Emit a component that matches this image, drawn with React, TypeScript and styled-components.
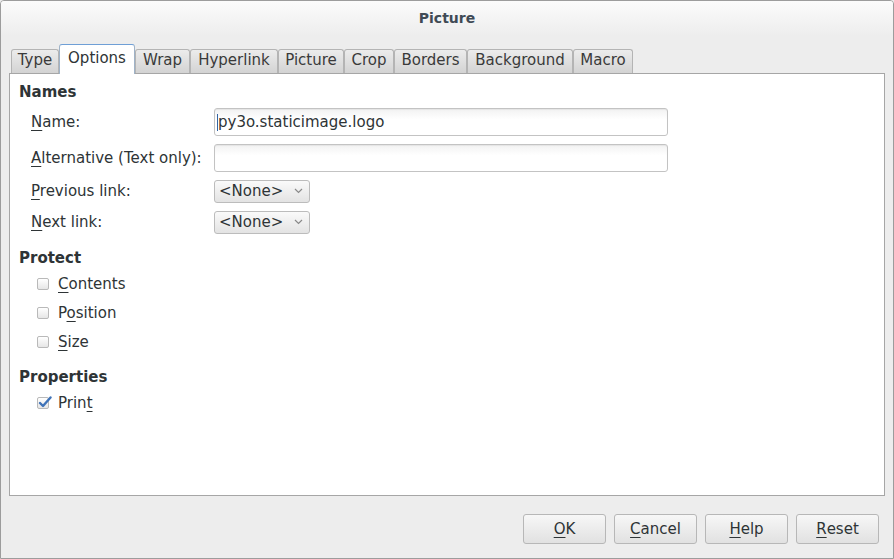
import React from "react";
import styled, { createGlobalStyle } from "styled-components";

const Global = createGlobalStyle`
  * { box-sizing: border-box; }
  html, body { margin: 0; padding: 0; background: #ededed; }
  body { font-family: "DejaVu Sans", "Liberation Sans", sans-serif; font-size: 15px; color: #2e3436; }
`;

const Window = styled.div`
  width: 894px;
  height: 559px;
  border: 1px solid #9c9c9c;
  border-radius: 4px 4px 0 0;
  background: #ededed;
  display: flex;
  flex-direction: column;
  overflow: hidden;
`;

const TitleBar = styled.div`
  height: 35px;
  display: flex;
  align-items: center;
  justify-content: center;
  padding-bottom: 1px;
  background: linear-gradient(#fbfbfb, #ededed);
  font-size: 14px;
  font-weight: bold;
  color: #3f4a55;
`;

const TabStrip = styled.div`
  margin: 8px 8px 0 8px;
  padding-left: 2px;
  height: 29px;
  display: flex;
  align-items: flex-end;
`;

const Tab = styled.div<{ $w: number; $active?: boolean }>`
  width: ${(p) => p.$w}px;
  height: ${(p) => (p.$active ? 30 : 24)}px;
  margin-bottom: ${(p) => (p.$active ? -1 : 0)}px;
  position: relative;
  z-index: ${(p) => (p.$active ? 2 : 0)};
  display: flex;
  align-items: center;
  justify-content: center;
  padding-bottom: ${(p) => (p.$active ? 4 : 3)}px;
  border: 1px solid ${(p) => (p.$active ? "#9fb3c8" : "#b4b4b4")};
  border-top-color: ${(p) => (p.$active ? "#6f9fd6" : "#b4b4b4")};
  border-bottom: none;
  border-radius: 3px 3px 0 0;
  background: ${(p) => (p.$active ? "#ffffff" : "linear-gradient(#ececec, #d3d3d3)")};
  color: ${(p) => (p.$active ? "#2e3436" : "#3a3a3a")};
  font-size: 15px;
  white-space: nowrap;
`;

const Panel = styled.div`
  margin: 0 8px;
  height: 423px;
  border: 1px solid #a6a6a6;
  background: #ffffff;
  padding: 9px 9px 0 9px;
  display: flex;
  flex-direction: column;
  position: relative;
  z-index: 1;
`;

const Heading = styled.div<{ $top: number }>`
  margin-top: ${(p) => p.$top}px;
  height: 18px;
  line-height: 18px;
  font-weight: bold;
  font-size: 15px;
  color: #2e3436;
`;

const FormGrid = styled.div`
  margin-top: 7px;
  padding-left: 12px;
  display: grid;
  grid-template-columns: 183px 454px;
  grid-template-rows: 28px 28px 23px 23px;
  row-gap: 8px;
  align-items: center;
`;

const Label = styled.label<{ $lift?: boolean }>`
  font-size: 15px;
  line-height: 18px;
  color: #2e3436;
  white-space: nowrap;
  margin-top: ${(p) => (p.$lift ? -2 : 0)}px;
  u { text-decoration: underline; text-underline-offset: 3px; text-decoration-thickness: 1px; }
`;

const TextField = styled.div`
  height: 28px;
  border: 1px solid #c3c3c3;
  border-radius: 3px;
  background: linear-gradient(#f2f2f2, #ffffff 40%, #ffffff);
  box-shadow: inset 0 1px 1px rgba(0,0,0,0.06);
  display: flex;
  align-items: center;
  padding-left: 2px;
  font-size: 15px;
  color: #2e3436;
`;

const Caret = styled.span`
  display: inline-block;
  width: 1px;
  height: 17px;
  background: #3465a4;
`;

const Dropdown = styled.div`
  width: 96px;
  height: 23px;
  border: 1px solid #bcbcbc;
  border-radius: 3px;
  background: linear-gradient(#fafafa, #e3e3e3);
  display: flex;
  align-items: center;
  justify-content: space-between;
  padding: 0 6px 1px 4px;
  font-size: 15px;
  color: #2e3436;
`;

const CheckList = styled.div<{ $top: number }>`
  margin-top: ${(p) => p.$top}px;
  padding-left: 18px;
  display: flex;
  flex-direction: column;
  gap: 9px;
`;

const CheckRow = styled.div`
  height: 20px;
  display: flex;
  align-items: center;
  gap: 9px;
`;

const Box = styled.span`
  position: relative;
  width: 12px;
  height: 12px;
  border: 1px solid #b9b9b9;
  border-radius: 2px;
  background: linear-gradient(#ffffff, #e6e6e6);
  flex: none;
`;

const Tick = styled.svg`
  position: absolute;
  left: 0px;
  top: -3px;
`;

const ButtonRow = styled.div`
  margin-top: 18px;
  padding-right: 14px;
  display: flex;
  justify-content: flex-end;
  gap: 8px;
`;

const Button = styled.div`
  width: 83px;
  height: 30px;
  border: 1px solid #b7b7b7;
  border-radius: 3px;
  background: linear-gradient(#f7f7f7, #e1e1e1);
  display: flex;
  align-items: center;
  justify-content: center;
  font-size: 15px;
  color: #2e3436;
  u { text-decoration: underline; text-underline-offset: 3px; text-decoration-thickness: 1px; }
`;

const Chevron = () => (
  <svg width="9" height="6" viewBox="0 0 9 6">
    <path d="M1 1 L4.5 4.5 L8 1" fill="none" stroke="#8a8a8a" strokeWidth="1.2" />
  </svg>
);

const tabs = [
  { t: "Type", w: 48 },
  { t: "Options", w: 76, active: true },
  { t: "Wrap", w: 55 },
  { t: "Hyperlink", w: 88 },
  { t: "Picture", w: 66 },
  { t: "Crop", w: 50 },
  { t: "Borders", w: 73 },
  { t: "Background", w: 106 },
  { t: "Macro", w: 60 },
];

const checks: { pre: string; u: string; post: string }[] = [
  { pre: "", u: "C", post: "ontents" },
  { pre: "P", u: "o", post: "sition" },
  { pre: "", u: "S", post: "ize" },
];

export default function App() {
  return (
    <>
      <Global />
      <Window>
        <TitleBar>Picture</TitleBar>
        <TabStrip>
          {tabs.map((tb) => (
            <Tab key={tb.t} $w={tb.w} $active={tb.active}>
              {tb.t}
            </Tab>
          ))}
        </TabStrip>
        <Panel>
          <Heading $top={0}>Names</Heading>
          <FormGrid>
            <Label><u>N</u>ame:</Label>
            <TextField><Caret />py3o.staticimage.logo</TextField>
            <Label><u>A</u>lternative (Text only):</Label>
            <TextField />
            <Label $lift><u>P</u>revious link:</Label>
            <Dropdown>&lt;None&gt;<Chevron /></Dropdown>
            <Label $lift><u>N</u>ext link:</Label>
            <Dropdown>&lt;None&gt;<Chevron /></Dropdown>
          </FormGrid>
          <Heading $top={15}>Protect</Heading>
          <CheckList $top={7}>
            {checks.map((c) => (
              <CheckRow key={c.u + c.post}>
                <Box />
                <Label>{c.pre}<u>{c.u}</u>{c.post}</Label>
              </CheckRow>
            ))}
          </CheckList>
          <Heading $top={16}>Properties</Heading>
          <CheckList $top={7}>
            <CheckRow>
              <Box>
                <Tick width="14" height="13" viewBox="0 0 14 13">
                  <path d="M2 8 L5 11 L12.5 2.5" fill="none" stroke="#3f73b8" strokeWidth="2.4" strokeLinecap="round" strokeLinejoin="round" />
                </Tick>
              </Box>
              <Label>Prin<u>t</u></Label>
            </CheckRow>
          </CheckList>
        </Panel>
        <ButtonRow>
          <Button><u>O</u>K</Button>
          <Button><u>C</u>ancel</Button>
          <Button><u>H</u>elp</Button>
          <Button><u>R</u>eset</Button>
        </ButtonRow>
      </Window>
    </>
  );
}
